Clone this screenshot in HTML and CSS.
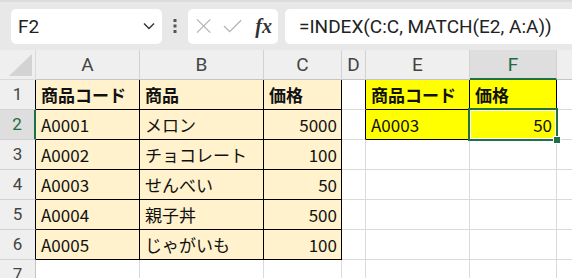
FILE: index.html
```html
<!DOCTYPE html>
<html>
<head>
    <title>Sheet</title>
    <link rel="stylesheet" href="styles.css">
</head>
<body>
    <div class="toolbar">
        <div class="namebox">
            <span>F2</span>
            <svg class="chevron" width="12" height="8" viewBox="0 0 12 8"><path d="M1 1.5 L6 6.5 L11 1.5" fill="none" stroke="#333" stroke-width="1.4"/></svg>
        </div>
        <svg class="kebab" width="4" height="14" viewBox="0 0 4 14"><rect x="0.5" y="0" width="3" height="3" fill="#555"/><rect x="0.5" y="5.5" width="3" height="3" fill="#555"/><rect x="0.5" y="11" width="3" height="3" fill="#555"/></svg>
        <div class="fxbox">
            <svg width="16" height="16" viewBox="0 0 16 16"><path d="M1 1 L15 15 M15 1 L1 15" stroke="#b3b3b3" stroke-width="1.3" fill="none"/></svg>
            <svg width="20" height="16" viewBox="0 0 20 16"><path d="M1 8 L7 14 L19 2" stroke="#b3b3b3" stroke-width="1.3" fill="none"/></svg>
            <span class="fx">fx</span>
        </div>
        <div class="formula">=INDEX(C:C, MATCH(E2, A:A))</div>
    </div>

    <div class="sheet">
        <div class="corner"><div class="tri"></div></div>
        <div class="ch">A</div>
        <div class="ch">B</div>
        <div class="ch">C</div>
        <div class="ch">D</div>
        <div class="ch">E</div>
        <div class="ch sel">F</div>
        <div class="ch">G</div>

        <div class="rh edge">1</div>
        <div class="c t b">商品コード</div>
        <div class="c t b">商品</div>
        <div class="c t b">価格</div>
        <div class="c edge"></div>
        <div class="c y b">商品コード</div>
        <div class="c y b">価格</div>
        <div class="c"></div>

        <div class="rh sel">2</div>
        <div class="c t">A0001</div>
        <div class="c t">メロン</div>
        <div class="c t n">5000</div>
        <div class="c edge"></div>
        <div class="c y">A0003</div>
        <div class="c y n active">50<div class="cursor"><div class="handle"></div></div></div>
        <div class="c"></div>

        <div class="rh edge">3</div>
        <div class="c t">A0002</div>
        <div class="c t">チョコレート</div>
        <div class="c t n">100</div>
        <div class="c"></div>
        <div class="c"></div>
        <div class="c"></div>
        <div class="c"></div>

        <div class="rh edge">4</div>
        <div class="c t">A0003</div>
        <div class="c t">せんべい</div>
        <div class="c t n">50</div>
        <div class="c"></div>
        <div class="c"></div>
        <div class="c"></div>
        <div class="c"></div>

        <div class="rh edge">5</div>
        <div class="c t">A0004</div>
        <div class="c t">親子丼</div>
        <div class="c t n">500</div>
        <div class="c"></div>
        <div class="c"></div>
        <div class="c"></div>
        <div class="c"></div>

        <div class="rh edge">6</div>
        <div class="c t">A0005</div>
        <div class="c t">じゃがいも</div>
        <div class="c t n">100</div>
        <div class="c"></div>
        <div class="c"></div>
        <div class="c"></div>
        <div class="c"></div>

        <div class="rh">7</div>
        <div class="c"></div>
        <div class="c"></div>
        <div class="c"></div>
        <div class="c"></div>
        <div class="c"></div>
        <div class="c"></div>
        <div class="c"></div>
    </div>
</body>
</html>
```

FILE: styles.css
```css
body {
    margin: 0;
    width: 572px;
    height: 278px;
    overflow: hidden;
    background-color: #ffffff;
    font-family: "Noto Sans CJK JP", "Noto Sans", sans-serif;
}
.toolbar {
    display: flex;
    align-items: center;
    height: 50px;
    padding: 0 0 0 11px;
    background-color: #e8e8e8;
    box-sizing: border-box;
    border-top: 2px solid #dcdcdc;
}
.namebox {
    display: flex;
    align-items: center;
    justify-content: space-between;
    width: 151px;
    height: 35px;
    padding: 0 7px 0 7px;
    box-sizing: border-box;
    background-color: #ffffff;
    border-radius: 5px;
    font-family: Roboto, "Noto Sans", sans-serif;
    font-size: 19px;
    color: #222;
}
.kebab {
    margin: 0 11px 0 11px;
}
.fxbox {
    display: flex;
    align-items: center;
    gap: 12px;
    width: 90px;
    height: 35px;
    padding: 0 6px 0 8px;
    box-sizing: border-box;
    background-color: #ffffff;
    border-radius: 5px;
}
.fx {
    font-family: "Liberation Serif", serif;
    font-style: italic;
    font-weight: bold;
    font-size: 20px;
    color: #333;
    margin-left: 1px;
}
.formula {
    flex: 1;
    height: 35px;
    line-height: 35px;
    margin-left: 7px;
    padding-left: 14px;
    background-color: #ffffff;
    border-radius: 5px 0 0 5px;
    font-family: Roboto, "Noto Sans", sans-serif;
    font-size: 19px;
    color: #222;
    white-space: nowrap;
}
.sheet {
    display: grid;
    grid-template-columns: 36px 104px 124px 78px 24px 104px 87px 80px;
    grid-auto-rows: 30px;
}
.sheet > div {
    box-sizing: border-box;
    border-right: 1px solid #dadada;
    border-bottom: 1px solid #dadada;
}
.corner {
    position: relative;
    background-color: #efefef;
}
.corner .tri {
    position: absolute;
    right: 3px;
    bottom: 3px;
    width: 23px;
    height: 22px;
    background-color: #d3d3d3;
    clip-path: polygon(100% 0, 100% 100%, 0 100%);
}
.sheet > .ch {
    background-color: #efefef;
    border-right-color: #d2d2d2;
    border-bottom-color: #c4c4c4;
    text-align: center;
    font-family: Roboto, "Noto Sans", sans-serif;
    font-size: 19px;
    line-height: 29px;
    color: #444;
}
.sheet > .ch.sel {
    background-color: #dedede;
    color: #1d6b3e;
    border-bottom: 2px solid #1e7145;
}
.sheet > .rh {
    background-color: #efefef;
    border-right-color: #c4c4c4;
    border-bottom-color: #d2d2d2;
    text-align: center;
    font-family: Roboto, "Noto Sans", sans-serif;
    font-size: 17px;
    line-height: 29px;
    color: #444;
}
.sheet > .rh.edge {
    border-right-color: #000000;
}
.sheet > .rh.sel {
    background-color: #dedede;
    color: #1d6b3e;
    border-right: 2px solid #1e7145;
}
.c {
    font-size: 17px;
    line-height: 29px;
    padding: 0 4px 0 5px;
    color: #111;
    white-space: nowrap;
    overflow: hidden;
}
.sheet > .c.edge {
    border-right-color: #000000;
}
.sheet > .t {
    background-color: #fff2cc;
    border-right-color: #000000;
    border-bottom-color: #000000;
}
.sheet > .y {
    background-color: #ffff00;
    border-right-color: #000000;
    border-bottom-color: #000000;
}
.b {
    font-weight: bold;
}
.n {
    text-align: right;
}
.active {
    position: relative;
    overflow: visible;
}
.cursor {
    position: absolute;
    left: -2px;
    top: -2px;
    right: -2px;
    bottom: -2px;
    border: 2px solid #1e7145;
    box-shadow: inset 0 0 0 1px #ffffff;
}
.handle {
    position: absolute;
    right: -5px;
    bottom: -5px;
    width: 6px;
    height: 6px;
    background-color: #1e7145;
    border: 1px solid #ffffff;
}
```
